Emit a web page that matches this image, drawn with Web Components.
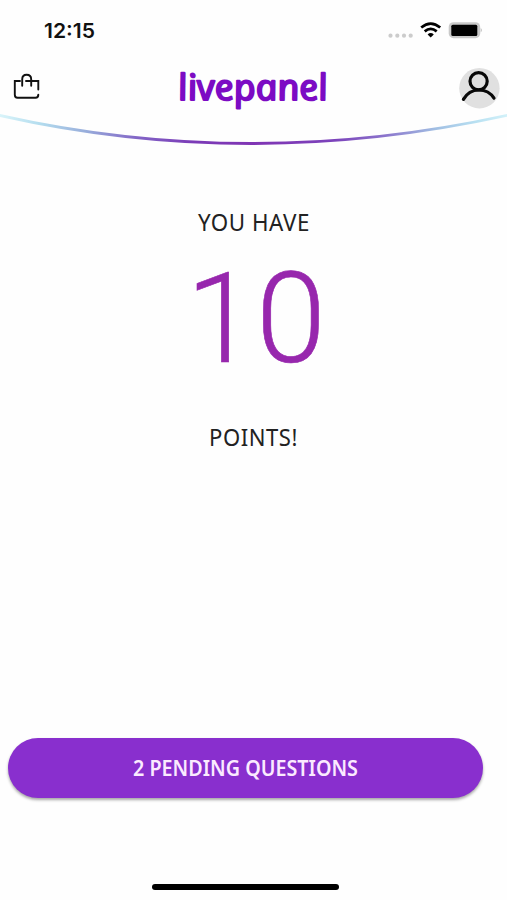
<!DOCTYPE html>
<html lang="en">
<head>
<meta charset="utf-8">
<meta name="viewport" content="width=device-width, initial-scale=1">
<title>livepanel</title>
<style>
    html, body {
        margin: 0;
        height: 100%;
        background: #fefefe;
        overflow: hidden;
    }
</style>
</head>
<body>
<live-app></live-app>

<script>
// One line of text, stretched to a fixed width
class FitText extends HTMLElement {
    constructor() {
        super();
        this.attachShadow({ mode: 'open' });
    }

    connectedCallback() {
        const width = this.getAttribute('width');
        const height = this.getAttribute('height');
        const skew = this.getAttribute('skew') || 0;
        this.shadowRoot.innerHTML = `
            <style>
                :host { display: block; }
                svg { display: block; overflow: visible; }
                text {
                    fill: currentColor;
                    stroke: currentColor;
                    stroke-width: var(--weight, 0);
                    stroke-linejoin: round;
                }
            </style>
            <svg width="${width}" height="${height}">
                <text x="0" y="0" textLength="${width}" lengthAdjust="spacingAndGlyphs" transform="translate(0 ${height}) skewX(${skew})">${this.getAttribute('text')}</text>
            </svg>
        `;
    }
}

class StatusBar extends HTMLElement {
    constructor() {
        super();
        this.attachShadow({ mode: 'open' });
        this.shadowRoot.innerHTML = `
            <style>
                :host {
                    display: flex;
                    justify-content: space-between;
                    box-sizing: border-box;
                    height: 60px;
                    padding: 21px 24px 0 44px;
                }
                fit-text {
                    margin-top: 3px;
                    font: 600 20px Inter, sans-serif;
                    color: #111;
                }
                svg { display: block; }
            </style>
            <fit-text text="12:15" width="51" height="14"></fit-text>
            <svg width="95" height="19" viewBox="0 0 95 19">
                <g fill="#ccc">
                    <circle cx="2.5" cy="14.7" r="2.1"/>
                    <circle cx="9.3" cy="14.7" r="2.1"/>
                    <circle cx="16" cy="14.7" r="2.1"/>
                    <circle cx="22.7" cy="14.7" r="2.1"/>
                </g>
                <g fill="none" stroke="#000" stroke-width="2.7">
                    <path d="M33.2 6.5Q42.7-1.4 52.2 6.5"/>
                    <path d="M36.7 10.4Q42.7 5.4 48.7 10.4"/>
                </g>
                <path d="M39.6 13.4Q42.7 10.7 45.8 13.4L42.7 16.5Z"/>
                <rect x="60.7" y="1.2" width="31.5" height="16" rx="4.8" fill="#c9c9c9"/>
                <path d="M92.7 7Q95 9.2 92.7 11.5Z" fill="#bbb"/>
                <rect x="63.3" y="3.8" width="26" height="11.2" rx="1.5"/>
            </svg>
        `;
    }
}

class AppHeader extends HTMLElement {
    constructor() {
        super();
        this.attachShadow({ mode: 'open' });
        this.shadowRoot.innerHTML = `
            <style>
                :host { display: block; height: 90px; }
                .bar {
                    display: flex;
                    justify-content: space-between;
                    align-items: flex-start;
                    height: 52px;
                    padding: 0 7px 0 12px;
                }
                .bag { margin-top: 13px; }
                .user { margin-top: 8px; }
                .logo {
                    margin: 12px 0 0 11px;
                    font: italic 400 36px "Open Sans", sans-serif;
                    color: #7c0bc4;
                    --weight: 1.9px;
                }
                svg { display: block; }
            </style>
            <div class="bar">
                <svg class="bag" width="28" height="27" viewBox="0 0 28 27" fill="none" stroke="#111" stroke-width="1.9" stroke-linecap="round">
                    <path d="M8 8H2.8V21.8Q2.8 24.8 5.5 24.8H23.5Q26.3 24.8 26.3 21.8"/>
                    <path d="M14 8H26.3V16.5"/>
                    <path d="M10.2 12.8V6.4Q10.2 1.8 14.6 1.8Q19.2 1.8 19.2 6.4V12.8"/>
                </svg>
                <fit-text class="logo" text="livepanel" width="150" height="28" skew="12"></fit-text>
                <svg class="user" width="41" height="41" viewBox="0 0 41 41">
                    <circle cx="20.4" cy="20.2" r="20.2" fill="#e0e0e0"/>
                    <g fill="none" stroke="#080808" stroke-width="3.2" stroke-linecap="round">
                        <circle cx="19.6" cy="13.2" r="8.6"/>
                        <path d="M4.4 31.4Q9.8 22 19.8 22T35 30.2"/>
                    </g>
                </svg>
            </div>
            <svg width="507" height="38" viewBox="0 0 507 38">
                <defs>
                    <linearGradient id="arc" gradientUnits="userSpaceOnUse" x1="0" y1="0" x2="507" y2="0">
                        <stop offset="0" stop-color="#d9f4fa"/>
                        <stop offset=".08" stop-color="#b3dcee"/>
                        <stop offset=".17" stop-color="#98addb"/>
                        <stop offset=".27" stop-color="#8265c6"/>
                        <stop offset=".38" stop-color="#7b3bb7"/>
                        <stop offset=".5" stop-color="#8035b4"/>
                        <stop offset=".66" stop-color="#7c43bb"/>
                        <stop offset=".76" stop-color="#8b75cc"/>
                        <stop offset=".86" stop-color="#a1bfe3"/>
                        <stop offset=".94" stop-color="#b9e1f2"/>
                        <stop offset="1" stop-color="#d2f1f9"/>
                    </linearGradient>
                </defs>
                <path d="M-2 3Q250 60 509 3" fill="none" stroke="url(#arc)" stroke-width="2.8"/>
            </svg>
        `;
    }
}

class PointsDisplay extends HTMLElement {
    constructor() {
        super();
        this.attachShadow({ mode: 'open' });
        this.shadowRoot.innerHTML = `
            <style>
                :host {
                    display: flex;
                    flex-direction: column;
                    align-items: center;
                    height: 524px;
                    padding-top: 64px;
                    font: 400 24px "Noto Sans", sans-serif;
                    letter-spacing: .6px;
                    color: #222;
                }
                svg { display: block; overflow: visible; margin: 40px 0 67px 8px; }
                text {
                    font: 300 126px Roboto, sans-serif;
                    letter-spacing: 0;
                    fill: #9727ad;
                    stroke: #9727ad;
                    stroke-width: .6px;
                }
            </style>
            <fit-text text="YOU HAVE" width="112" height="17"></fit-text>
            <svg width="130" height="91"><text x="-7 63" y="91">10</text></svg>
            <fit-text text="POINTS!" width="89" height="17"></fit-text>
        `;
    }
}

class PillButton extends HTMLElement {
    constructor() {
        super();
        this.attachShadow({ mode: 'open' });
        this.shadowRoot.innerHTML = `
            <style>
                :host { display: block; margin: 0 24px 0 8px; }
                button {
                    display: flex;
                    justify-content: center;
                    align-items: center;
                    width: 100%;
                    height: 60px;
                    padding: 0;
                    border: none;
                    border-radius: 30px;
                    background: #892fce;
                    color: #fbeaff;
                    box-shadow: 0 2px 3px rgba(0, 0, 0, .35);
                }
            </style>
            <button><slot></slot></button>
        `;
    }
}

class LiveApp extends HTMLElement {
    constructor() {
        super();
        this.attachShadow({ mode: 'open' });
        this.shadowRoot.innerHTML = `
            <style>
                :host {
                    display: flex;
                    flex-direction: column;
                    width: 507px;
                    height: 900px;
                }
                .label { font: 600 22px "Noto Sans", sans-serif; }
                .home {
                    width: 187px;
                    height: 6px;
                    margin: 86px 0 0 152px;
                    border-radius: 3px;
                    background: #000;
                }
            </style>
            <status-bar></status-bar>
            <app-header></app-header>
            <points-display></points-display>
            <pill-button><fit-text class="label" text="2 PENDING QUESTIONS" width="225" height="16"></fit-text></pill-button>
            <div class="home"></div>
        `;
    }
}

customElements.define('fit-text', FitText);
customElements.define('status-bar', StatusBar);
customElements.define('app-header', AppHeader);
customElements.define('points-display', PointsDisplay);
customElements.define('pill-button', PillButton);
customElements.define('live-app', LiveApp);
</script>
</body>
</html>
